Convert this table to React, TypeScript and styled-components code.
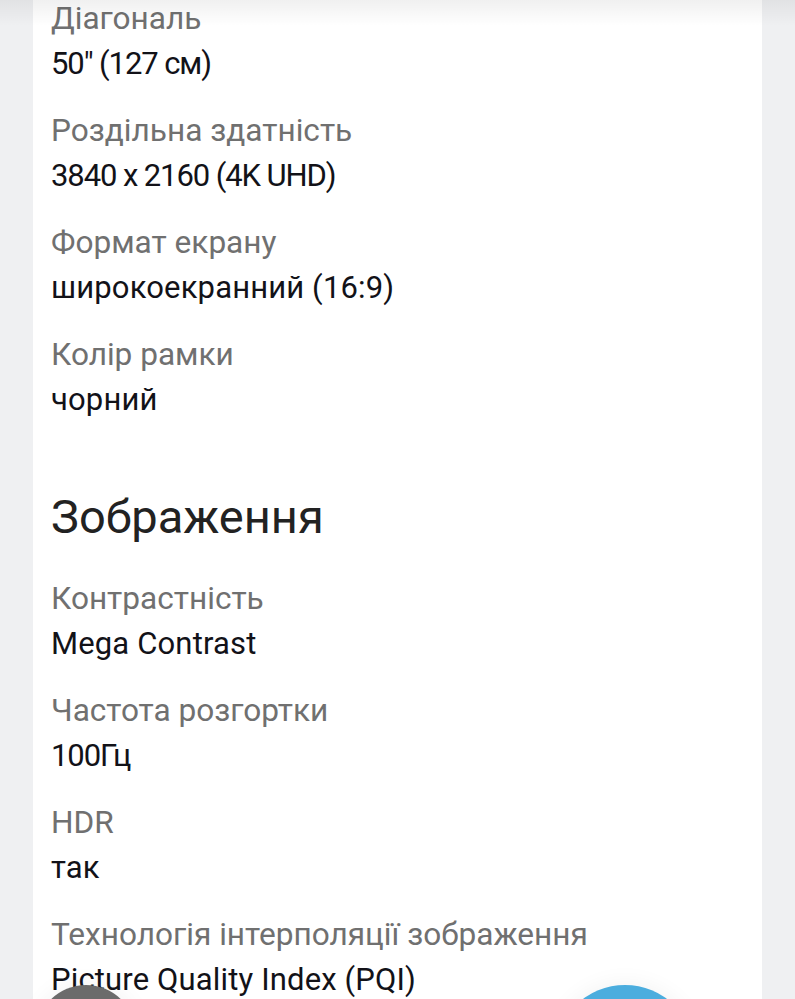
import React from "react";
import styled, { createGlobalStyle } from "styled-components";

const Global = createGlobalStyle`
  html, body { margin: 0; padding: 0; background: #eff0f2; }
  body { font-family: Roboto, "Noto Sans", Arial, sans-serif; overflow: hidden; }
`;

const Page = styled.div`
  position: relative;
  width: 795px;
  height: 999px;
  overflow: hidden;
  background: #eff0f2;
`;

const Card = styled.main`
  margin-left: 33px;
  width: 729px;
  min-height: 999px;
  background: #ffffff;
  box-sizing: border-box;
  padding: 1px 18px 0 18px;
  display: flex;
  flex-direction: column;
`;

const TopShade = styled.div`
  position: absolute;
  left: 0;
  right: 0;
  top: 0;
  height: 26px;
  background: linear-gradient(to bottom, rgba(0,0,0,0.06), rgba(0,0,0,0));
  pointer-events: none;
`;

const Section = styled.section`
  display: flex;
  flex-direction: column;
  gap: 31px;
`;

const Heading = styled.h2`
  margin: 74px 0 39px 0;
  font-size: 47px;
  line-height: 50px;
  font-weight: 400;
  color: #222222;
`;

const Row = styled.div`
  display: flex;
  flex-direction: column;
  gap: 9px;
`;

const Label = styled.div`
  font-size: 31.6px;
  line-height: 36px;
  color: #707070;
  white-space: nowrap;
`;

const Value = styled.div<{ $numeric?: boolean }>`
  font-size: 31px;
  line-height: 36px;
  color: #121218;
  white-space: nowrap;
  letter-spacing: ${(p) => (p.$numeric ? "-1.1px" : "0.15px")};
`;

const Fab = styled.div<{ $size: number; $left: number; $color: string }>`
  position: absolute;
  left: ${(p) => p.$left}px;
  top: 985px;
  width: ${(p) => p.$size}px;
  height: ${(p) => p.$size}px;
  border-radius: 50%;
  background: ${(p) => p.$color};
  box-shadow: 0 0 24px rgba(0, 0, 0, 0.06);
`;

type Spec = { label: string; value: string; numeric?: boolean };

const general: Spec[] = [
  { label: "Діагональ", value: "50\" (127 см)", numeric: true },
  { label: "Роздільна здатність", value: "3840 x 2160 (4K UHD)", numeric: true },
  { label: "Формат екрану", value: "широкоекранний (16:9)" },
  { label: "Колір рамки", value: "чорний" },
];

const picture: Spec[] = [
  { label: "Контрастність", value: "Mega Contrast" },
  { label: "Частота розгортки", value: "100Гц", numeric: true },
  { label: "HDR", value: "так" },
  { label: "Технологія інтерполяції зображення", value: "Picture Quality Index (PQI)" },
];

function SpecList({ items }: { items: Spec[] }) {
  return (
    <Section>
      {items.map((s) => (
        <Row key={s.label}>
          <Label>{s.label}</Label>
          <Value $numeric={s.numeric}>{s.value}</Value>
        </Row>
      ))}
    </Section>
  );
}

export default function App() {
  return (
    <Page>
      <Global />
      <Card>
        <SpecList items={general} />
        <Heading>Зображення</Heading>
        <SpecList items={picture} />
      </Card>
      <TopShade />
      <Fab $size={100} $left={36} $color="#6b6b6b" />
      <Fab $size={140} $left={555} $color="#4badde" />
    </Page>
  );
}
